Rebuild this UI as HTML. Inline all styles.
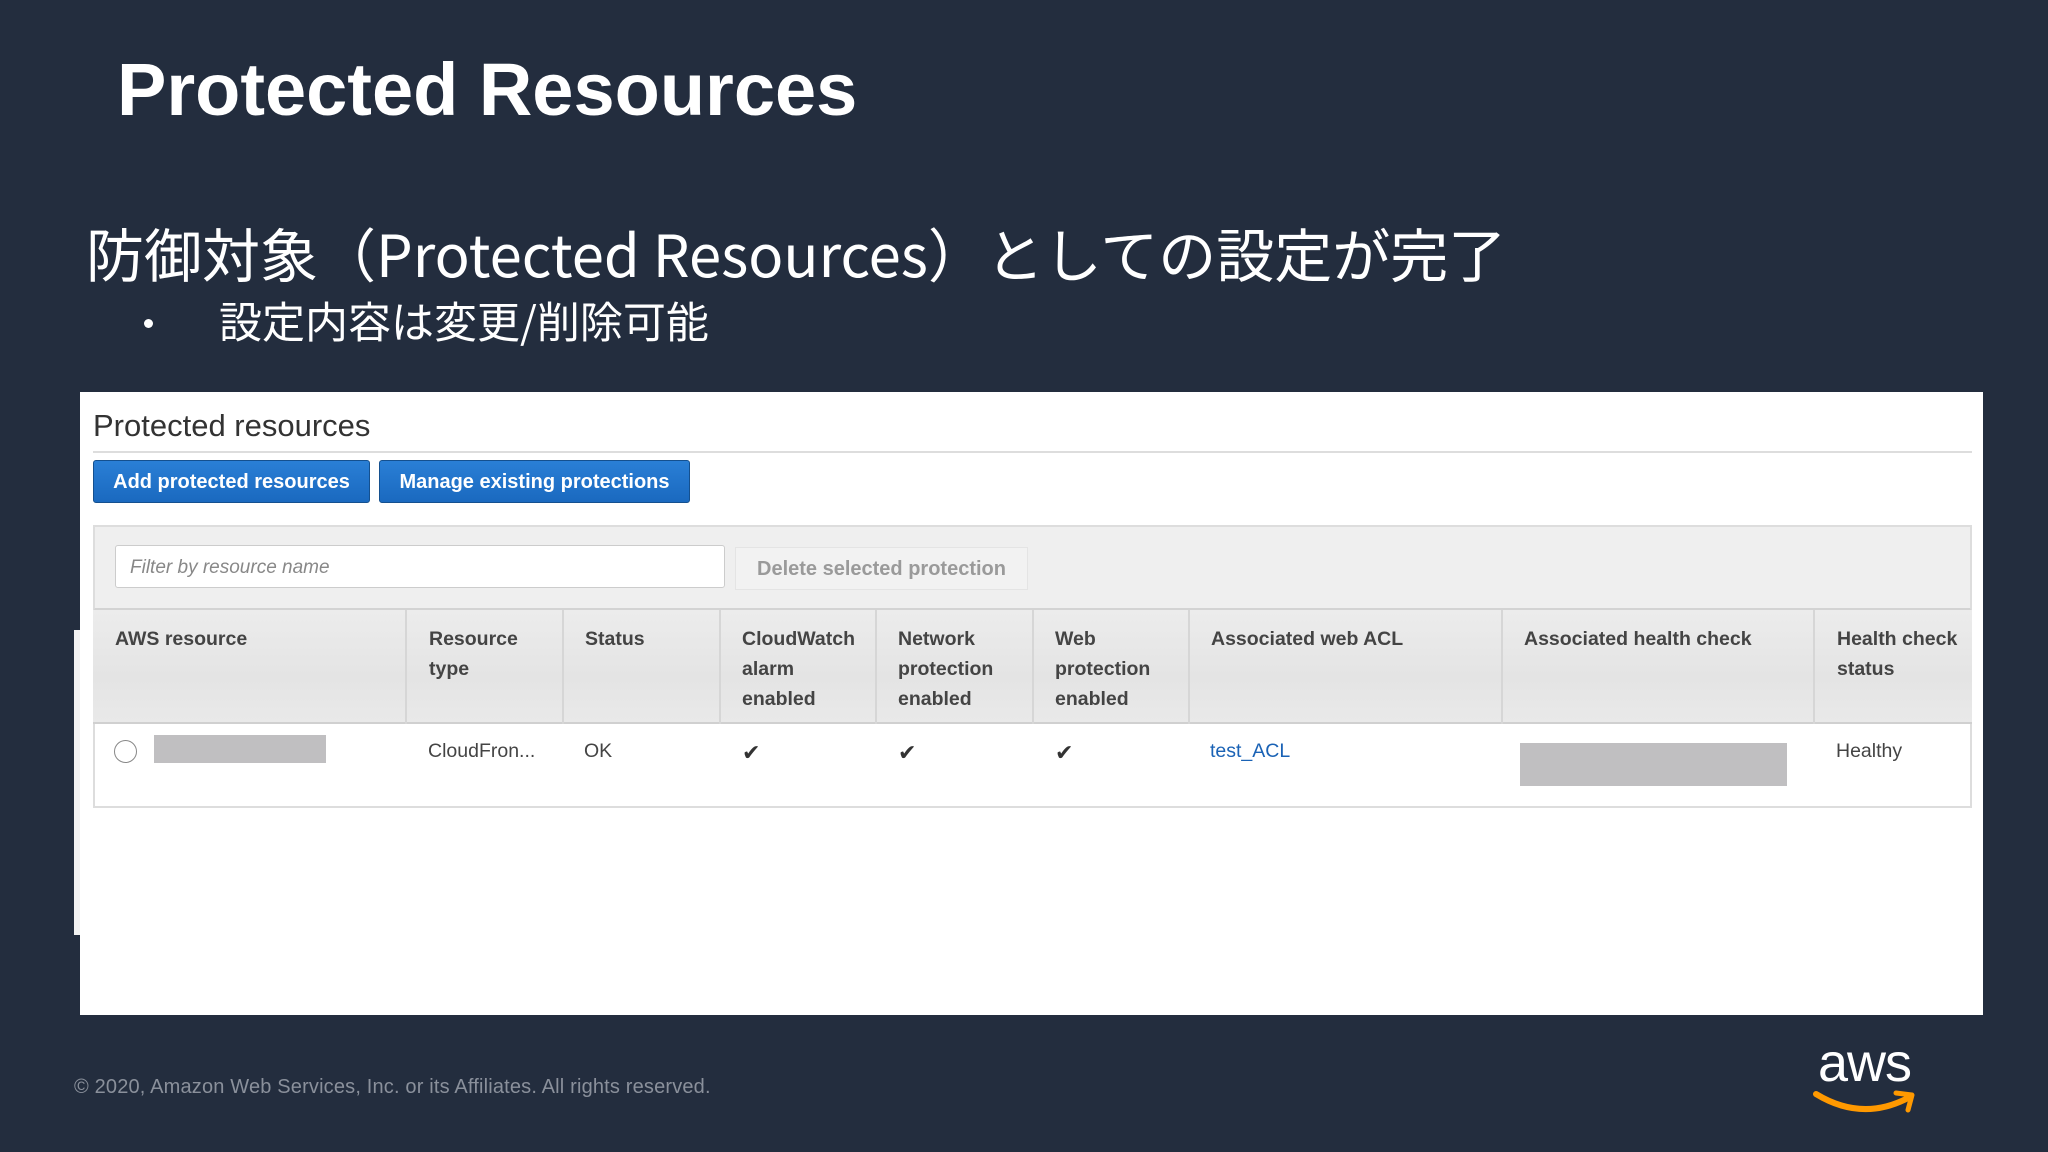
<!DOCTYPE html>
<html><head><meta charset="utf-8"><style>
*{margin:0;padding:0;box-sizing:border-box}
body{width:2048px;height:1152px;background:#232d3e;position:relative;overflow:hidden;font-family:"Liberation Sans","Noto Sans CJK JP",sans-serif}
.abs{position:absolute}
.title{left:117px;top:47px;font-size:74px;font-weight:bold;color:#fff;white-space:nowrap}
.sub{left:86px;top:210px;font-size:58px;color:#fff;white-space:nowrap;font-family:"Noto Sans CJK JP","Liberation Sans",sans-serif}
.bul{left:219px;top:289px;font-size:43px;color:#fff;white-space:nowrap;font-family:"Noto Sans CJK JP",sans-serif}
.dot{left:144px;top:319px;width:9px;height:9px;border-radius:50%;background:#fff}
.panel{left:80px;top:392px;width:1903px;height:623px;background:#fff}
.h2{left:93px;top:408px;font-size:31px;color:#333}
.hr{left:93px;top:451px;width:1879px;height:2px;background:#ddd}
.btn{height:43px;top:460px;background:linear-gradient(#2a7fd6,#1a69bf);border:1px solid #14508f;border-radius:3px;color:#fff;font-weight:bold;font-size:20px;line-height:43px;text-align:center}
.fp{left:93px;top:525px;width:1879px;height:86px;background:#efefef;border:2px solid #ddd;border-bottom:3px solid #d3d3d3}
.inp{left:115px;top:545px;width:610px;height:43px;background:#fff;border:1px solid #ccc;border-radius:3px;font-style:italic;color:#888;font-size:19px;line-height:43px;padding-left:14px}
.del{left:735px;top:547px;width:293px;height:43px;background:#f2f2f2;border:1px solid #e4e4e4;color:#9a9a9a;font-weight:bold;font-size:20px;line-height:43px;text-align:center}
.thead{left:93px;top:610px;width:1879px;height:114px;background:linear-gradient(#ececec,#e4e4e4 60%,#e9e9e9);border-bottom:2px solid #d0d0d0}
.sep{top:610px;width:2px;height:114px;background:#d6d6d6}
.th{top:624px;font-size:19.5px;font-weight:bold;color:#444;line-height:30px}
.row{left:93px;top:724px;width:1879px;height:84px;background:#fff;border:2px solid #ddd;border-top:none}
.td{top:740px;font-size:19.5px;color:#444}
.chk{top:740px;font-size:22px;color:#333}
.gray{background:#c0bfc1}
.foot{left:74px;top:1076px;font-size:20px;letter-spacing:0.17px;color:#8a909b;white-space:nowrap}
</style></head><body>
<div class="abs title">Protected Resources</div>
<div class="abs sub">防御対象（Protected Resources）としての設定が完了</div>
<div class="abs dot"></div>
<div class="abs bul">設定内容は変更/削除可能</div>
<div class="abs" style="left:74px;top:630px;width:6px;height:305px;background:#f2f2f2"></div>
<div class="abs panel"></div>
<div class="abs h2">Protected resources</div>
<div class="abs hr"></div>
<div class="abs btn" style="left:93px;width:277px">Add protected resources</div>
<div class="abs btn" style="left:379px;width:311px">Manage existing protections</div>
<div class="abs fp"></div>
<div class="abs inp">Filter by resource name</div>
<div class="abs del">Delete selected protection</div>
<div class="abs thead"></div>
<div class="abs sep" style="left:405px"></div>
<div class="abs sep" style="left:562px"></div>
<div class="abs sep" style="left:719px"></div>
<div class="abs sep" style="left:875px"></div>
<div class="abs sep" style="left:1032px"></div>
<div class="abs sep" style="left:1188px"></div>
<div class="abs sep" style="left:1501px"></div>
<div class="abs sep" style="left:1813px"></div>
<div class="abs th" style="left:115px">AWS resource</div>
<div class="abs th" style="left:429px">Resource<br>type</div>
<div class="abs th" style="left:585px">Status</div>
<div class="abs th" style="left:742px">CloudWatch<br>alarm<br>enabled</div>
<div class="abs th" style="left:898px">Network<br>protection<br>enabled</div>
<div class="abs th" style="left:1055px">Web<br>protection<br>enabled</div>
<div class="abs th" style="left:1211px">Associated web ACL</div>
<div class="abs th" style="left:1524px">Associated health check</div>
<div class="abs th" style="left:1837px">Health check<br>status</div>
<div class="abs row"></div>
<div class="abs" style="left:114px;top:740px;width:23px;height:23px;border:1.5px solid #888;border-radius:50%;background:#fff"></div>
<div class="abs gray" style="left:154px;top:735px;width:172px;height:28px"></div>
<div class="abs td" style="left:428px">CloudFron...</div>
<div class="abs td" style="left:584px">OK</div>
<div class="abs chk" style="left:742px">✔</div>
<div class="abs chk" style="left:898px">✔</div>
<div class="abs chk" style="left:1055px">✔</div>
<div class="abs td" style="left:1210px;color:#1a62b5">test_ACL</div>
<div class="abs gray" style="left:1520px;top:743px;width:267px;height:43px"></div>
<div class="abs td" style="left:1836px">Healthy</div>
<div class="abs foot">© 2020, Amazon Web Services, Inc. or its Affiliates. All rights reserved.</div>
<div class="abs" style="left:1818px;top:1032px;font-size:54px;color:#fff;letter-spacing:-1px">aws</div>
<svg class="abs" style="left:1812px;top:1088px" width="106" height="30" viewBox="0 0 106 30">
<path d="M4 6 Q50 34 96 10" stroke="#f90" stroke-width="6" fill="none" stroke-linecap="round"/>
<path d="M84 5 L100 7 L96 22" stroke="#f90" stroke-width="5" fill="none" stroke-linecap="round" stroke-linejoin="round"/>
</svg>
</body></html>
